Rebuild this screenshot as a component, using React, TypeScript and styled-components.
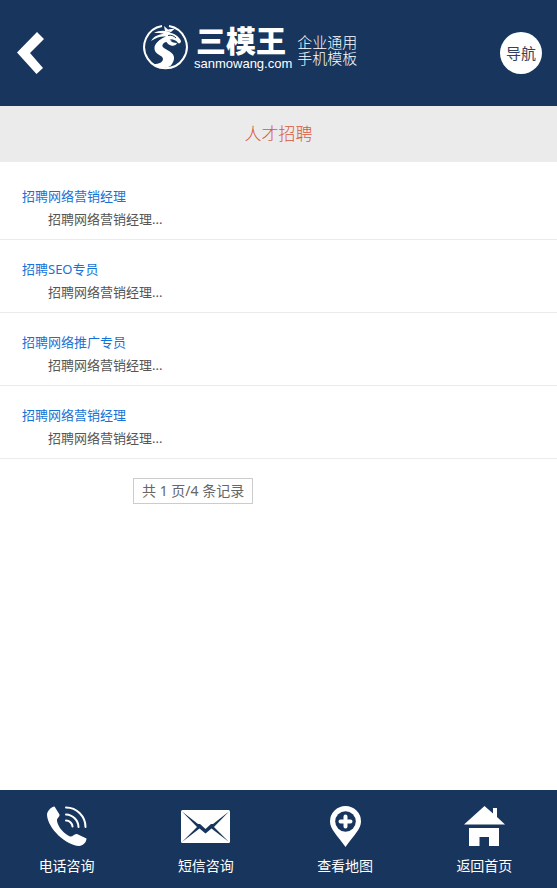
import React from "react";
import styled, { createGlobalStyle } from "styled-components";

const NAVY = "#18365d";

const GlobalStyle = createGlobalStyle`
  * { box-sizing: border-box; }
  body {
    margin: 0;
    background: #fff;
    font-family: "Noto Sans", "Noto Sans CJK SC", sans-serif;
    font-size: 13px;
    color: #555;
  }
  a { text-decoration: none; color: inherit; }
`;

const Page = styled.div`
  min-height: 100vh;
  display: flex;
  flex-direction: column;
`;

const Header = styled.header`
  display: grid;
  grid-template-columns: 126px 1fr auto;
  align-items: center;
  height: 106px;
  padding: 0 15px 0 17px;
  background: ${NAVY};
  color: #fff;
`;

const BackLink = styled.a`
  display: block;
  svg { display: block; }
`;

const Brand = styled.a`
  display: flex;
  align-items: center;
  padding-bottom: 12px;
  svg { flex: none; }
`;

const Wordmark = styled.span`
  display: flex;
  flex-direction: column;
  margin: 0 5px;
`;

const BrandName = styled.span`
  padding-left: 2px;
  font-family: "Noto Sans CJK SC", sans-serif;
  font-size: 30px;
  font-weight: 900;
  line-height: 34px;
`;

const Domain = styled.span`
  font-family: "Liberation Sans", sans-serif;
  font-size: 13px;
  line-height: 16px;
`;

const Slogan = styled.span`
  padding-top: 6px;
  font-family: "Noto Sans CJK SC", sans-serif;
  font-size: 15px;
  font-weight: 300;
  line-height: 16px;
`;

const SloganLine = styled.span`
  display: block;
  white-space: nowrap;
`;

const NavButton = styled.button`
  width: 42px;
  height: 42px;
  padding: 0;
  border: 0;
  border-radius: 50%;
  background: #fff;
  color: #34405e;
  font-family: "Noto Sans CJK SC", sans-serif;
  font-size: 15px;
  line-height: 42px;
`;

const Title = styled.h1`
  margin: 0;
  background: #ebebeb;
  color: #d9573b;
  font-size: 17px;
  font-weight: 300;
  line-height: 56px;
  text-align: center;
`;

const Main = styled.main`
  flex: 1;
`;

const JobList = styled.ul`
  margin: 0;
  padding: 5px 0 0;
  list-style: none;
`;

const Job = styled.li`
  padding: 18px 22px 8px;
  border-bottom: 1px solid #ebebeb;
  line-height: 23px;
`;

const JobLink = styled.a`
  display: block;
  && { color: #1673d6; }
`;

const Summary = styled.p`
  margin: 0;
  text-indent: 2em;
`;

const Pager = styled.div`
  width: max-content;
  margin: 19px 0 20px 133px;
  padding: 0 8px;
  border: 1px solid #ccc;
  color: #666;
  font-size: 14px;
  line-height: 24px;
`;

const Footer = styled.footer`
  display: grid;
  grid-template-columns: repeat(4, 1fr);
  height: 98px;
  background: ${NAVY};
  color: #fff;
`;

const Action = styled.a`
  display: flex;
  flex-direction: column;
  align-items: center;
  gap: 8px;
  padding: 15px 6px 0 0;
  font-size: 14px;
  line-height: 22px;
`;

const BackIcon = () => (
  <svg width="28" height="42" viewBox="0 0 28 42" aria-hidden="true">
    <path d="M20 0L27 7L13 21L26 36L19.5 42L0 20.500Z" fill="#fff" />
  </svg>
);

const Emblem = () => (
  <svg width="46" height="46" viewBox="0 0 46 46" aria-hidden="true">
    <path d="M26 2A21.300 21.300 0 1 1 19 2" fill="none" stroke="#fff" strokeWidth="2" />
    <g fill="#fff">
      <path d="M23 14C17 15 11 19 11.500 25C12 31 20 31 20 35C20 38 16 40 11 40C17 45 26 45 29 40C33 34 31 30 26 27C21 24 18 23 20 20C22 17 26 18 29 16Z" />
      <path d="M11 9C16 6 24 6 28 9C33 10 37 14 38 17C38 19 36 20 35 19C33 16 30 15 26 15C28 18 31 19 34 19C33 22 29 23 25 20L22 16L14 19C17 15 20 14 23 12.500C18 12 14 13 8 17C11 12 16 10 21 10C17 8.500 14 9 11 9Z" />
      <path d="M21 2L25 5.500L32 4.500L28 8L22 7Z" />
    </g>
    <path d="M25 11.500C28 10.500 31 12 33 14" fill="none" stroke={NAVY} strokeWidth="1" />
  </svg>
);

const PhoneIcon = () => (
  <svg width="40" height="42" viewBox="0 -1 40 42" aria-hidden="true">
    <path
      d="M7.500 0.500L12.500 8.500C13 11 9.500 12 10 15C11 21 17 28 23 30.500C26 31 27 27.500 30 28L39.500 32.500C39.500 36 36 40 32 40C19 39 1 23 0 9C0 5 4 1 7.500 0.500Z"
      fill="#fff"
    />
    <g fill="none" stroke="#fff" strokeWidth="2" strokeLinecap="round">
      <path d="M19 1.500A19.500 19.500 0 0 1 38.500 21" />
      <path d="M19 8.500A13 13 0 0 1 31.500 21" />
      <path d="M19 14.500A6.500 6.500 0 0 1 25.500 20.500" />
    </g>
  </svg>
);

const MailIcon = () => (
  <svg width="49" height="42" viewBox="0 -5 49 42" aria-hidden="true">
    <rect width="49" height="33" rx="1.500" fill="#fff" />
    <path
      d="M1 1.500L17 14L19 14L24.500 19L30 14L32 14L48 1.500L33 17L48 32L30.500 18.500L24.500 23.500L18.500 18.500L1 32L16 17Z"
      fill={NAVY}
    />
  </svg>
);

const PinIcon = () => (
  <svg width="31" height="42" viewBox="0 -1 31 42" aria-hidden="true">
    <path d="M15.500 0A15.500 15.500 0 0 1 31 15.500C31 23 24 29 15.500 41C7 29 0 23 0 15.500A15.500 15.500 0 0 1 15.500 0Z" fill="#fff" />
    <circle cx="15.500" cy="15.500" r="10.300" fill={NAVY} />
    <path d="M15.500 10.500V20.500M10.500 15.500H20.500" stroke="#fff" strokeWidth="4" strokeLinecap="round" />
  </svg>
);

const HomeIcon = () => (
  <svg width="41" height="42" viewBox="0 -1 41 42" aria-hidden="true">
    <path d="M20.500 0L29 7.500V2H33V11L41 18.500H0ZM5 22H35V40H25V31H15.500V40H5Z" fill="#fff" />
  </svg>
);

const jobs = ["招聘网络营销经理", "招聘SEO专员", "招聘网络推广专员", "招聘网络营销经理"];

const actions = [
  { label: "电话咨询", href: "#phone", Icon: PhoneIcon },
  { label: "短信咨询", href: "#message", Icon: MailIcon },
  { label: "查看地图", href: "#map", Icon: PinIcon },
  { label: "返回首页", href: "#home", Icon: HomeIcon },
];

export default function App() {
  return (
    <Page>
      <GlobalStyle />
      <Header>
        <BackLink href="#back" aria-label="返回"><BackIcon /></BackLink>
        <Brand href="#home">
          <Emblem />
          <Wordmark>
            <BrandName>三模王</BrandName>
            <Domain>sanmowang.com</Domain>
          </Wordmark>
          <Slogan>
            <SloganLine>企业通用</SloganLine>
            <SloganLine>手机模板</SloganLine>
          </Slogan>
        </Brand>
        <NavButton type="button">导航</NavButton>
      </Header>
      <Title>人才招聘</Title>
      <Main>
        <JobList>
          {jobs.map((job, index) => (
            <Job key={index}>
              <JobLink href="#job">{job}</JobLink>
              <Summary>招聘网络营销经理...</Summary>
            </Job>
          ))}
        </JobList>
        <Pager>共 1 页/4 条记录</Pager>
      </Main>
      <Footer>
        {actions.map(({ label, href, Icon }) => (
          <Action key={label} href={href}>
            <Icon />
            {label}
          </Action>
        ))}
      </Footer>
    </Page>
  );
}
